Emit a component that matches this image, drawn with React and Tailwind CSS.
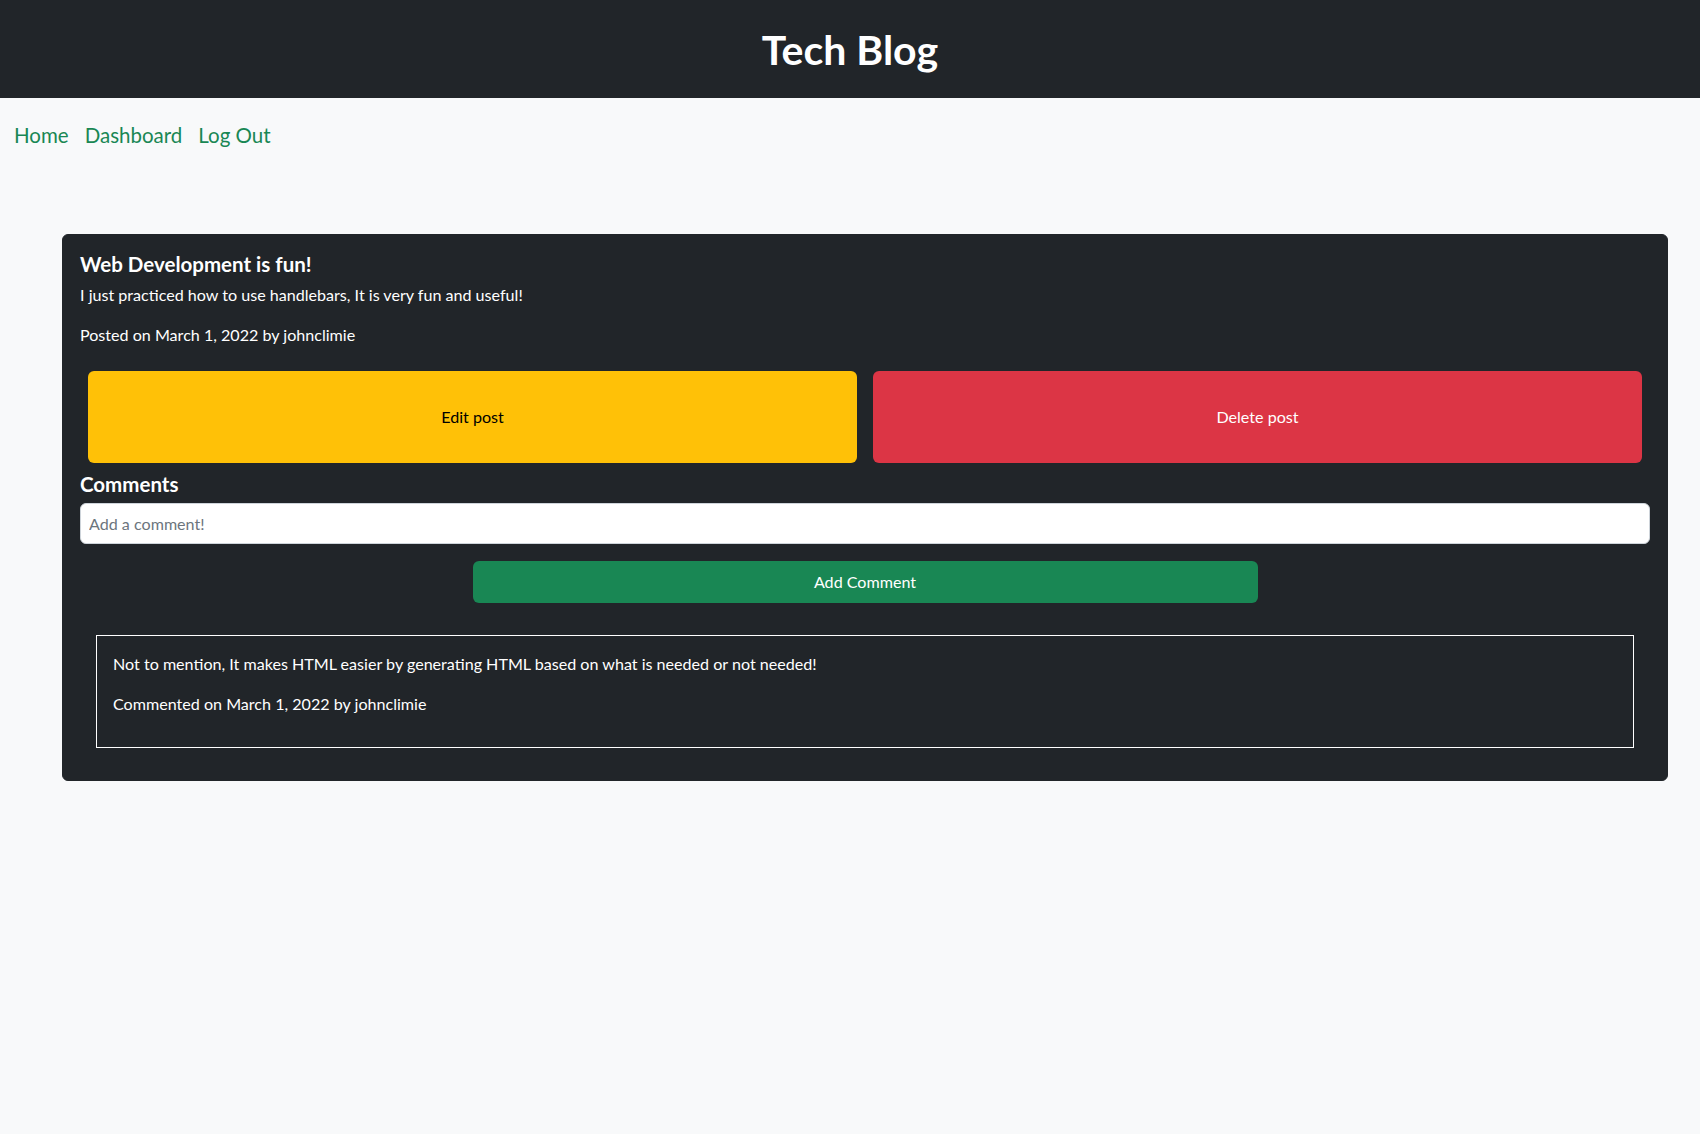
export default function App() {
    const font = { fontFamily: 'Lato, "Noto Sans", Arial, sans-serif' };

    return (
        <div className="min-h-[1134px] bg-[#f8f9fa]" style={font}>
            <header className="h-[98px] bg-[#212529] flex items-center justify-center">
                <h1 className="text-white text-[41px] font-bold leading-none">Tech Blog</h1>
            </header>

            <nav className="flex gap-[16px] pl-[14px] pt-[21px] text-[20.5px] leading-[32px] text-[#198754]">
                <a href="#">Home</a>
                <a href="#">Dashboard</a>
                <a href="#">Log Out</a>
            </nav>

            <main className="ml-[62px] mr-[32px] mt-[83px]">
                <section className="bg-[#212529] text-white rounded-[6px] border border-[#212529] p-[17px] text-[16.1px]">
                    <h5 className="text-[20.5px] leading-[24px] font-bold mb-[6px]">Web Development is fun!</h5>
                    <p className="leading-[26px] mb-[14px]">I just practiced how to use handlebars, It is very fun and useful!</p>
                    <p className="leading-[26px] mb-[15px]">Posted on March 1, 2022 by johnclimie</p>

                    {/* padding, not margin, so it doesn't collapse into the p above */}
                    <div className="flex gap-[16px] p-[8px]">
                        <button className="flex-1 h-[92px] bg-[#ffc107] text-black rounded-[6px]">Edit post</button>
                        <button className="flex-1 h-[92px] bg-[#dc3545] text-white rounded-[6px]">Delete post</button>
                    </div>

                    <h5 className="text-[20.5px] leading-[26px] font-bold mb-[6px]">Comments</h5>
                    <input
                        type="text"
                        placeholder="Add a comment!"
                        className="w-full h-[41px] bg-white border border-[#ced4da] rounded-[6px] px-[8px] text-[#212529] placeholder:text-[#6c757d]"
                    />
                    <div className="flex justify-center mt-[17px]">
                        <button className="w-1/2 h-[42px] bg-[#198754] text-white rounded-[6px]">Add Comment</button>
                    </div>

                    <div className="border border-white mx-[16px] mt-[32px] mb-[15px] px-[16px] pt-[15px] pb-[16px]">
                        <p className="leading-[26px] mb-[14px]">Not to mention, It makes HTML easier by generating HTML based on what is needed or not needed!</p>
                        <p className="leading-[26px] mb-[14px]">Commented on March 1, 2022 by johnclimie</p>
                    </div>
                </section>
            </main>
        </div>
    );
}
